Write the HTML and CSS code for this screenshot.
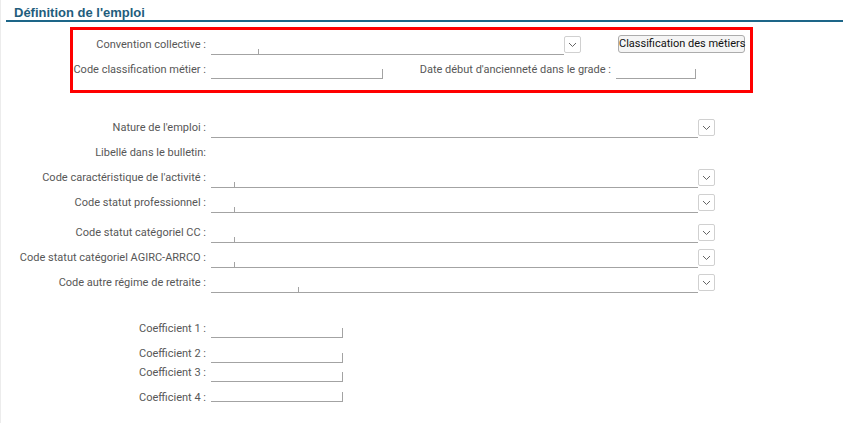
FILE: index.html
```html
<!DOCTYPE html>
<html lang="fr">
<head>
    <meta charset="UTF-8">
    <title>Définition de l'emploi</title>
    <link rel="stylesheet" href="styles.css">
</head>
<body>
    <div class="page">
        <h2 class="section-title">Définition de l'emploi</h2>

        <!-- Convention / classification block -->
        <div class="convention-box">
            <div class="row">
                <label class="label label-box">Convention collective :</label>
                <div class="combo combo-convention">
                    <div class="line"><span class="tick" style="width: 47px"></span></div>
                    <div class="drop"><svg width="9" height="6" viewBox="0 0 9 6"><polyline points="1,1 4.5,4.5 8,1" fill="none" stroke="#666" stroke-width="1"/></svg></div>
                </div>
                <button class="btn-classif">Classification des métiers</button>
            </div>
            <div class="row">
                <label class="label label-box">Code classification métier :</label>
                <div class="field field-end" style="width: 172px"><span class="tick-end"></span></div>
                <label class="label label-date">Date début d'ancienneté dans le grade :</label>
                <div class="field field-end" style="width: 80px"><span class="tick-end"></span></div>
            </div>
        </div>

        <!-- Emploi -->
        <div class="emploi">
            <div class="row">
                <label class="label">Nature de l'emploi :</label>
                <div class="combo">
                    <div class="line"></div>
                    <div class="drop"><svg width="9" height="6" viewBox="0 0 9 6"><polyline points="1,1 4.5,4.5 8,1" fill="none" stroke="#666" stroke-width="1"/></svg></div>
                </div>
            </div>
            <div class="row">
                <label class="label">Libellé dans le bulletin:</label>
            </div>
            <div class="row">
                <label class="label">Code caractéristique de l'activité :</label>
                <div class="combo">
                    <div class="line"><span class="tick" style="width: 23px"></span></div>
                    <div class="drop"><svg width="9" height="6" viewBox="0 0 9 6"><polyline points="1,1 4.5,4.5 8,1" fill="none" stroke="#666" stroke-width="1"/></svg></div>
                </div>
            </div>
            <div class="row row-spaced">
                <label class="label">Code statut professionnel :</label>
                <div class="combo">
                    <div class="line"><span class="tick" style="width: 23px"></span></div>
                    <div class="drop"><svg width="9" height="6" viewBox="0 0 9 6"><polyline points="1,1 4.5,4.5 8,1" fill="none" stroke="#666" stroke-width="1"/></svg></div>
                </div>
            </div>
            <div class="row">
                <label class="label">Code statut catégoriel CC :</label>
                <div class="combo">
                    <div class="line"><span class="tick" style="width: 23px"></span></div>
                    <div class="drop"><svg width="9" height="6" viewBox="0 0 9 6"><polyline points="1,1 4.5,4.5 8,1" fill="none" stroke="#666" stroke-width="1"/></svg></div>
                </div>
            </div>
            <div class="row">
                <label class="label">Code statut catégoriel AGIRC-ARRCO :</label>
                <div class="combo">
                    <div class="line"><span class="tick" style="width: 23px"></span></div>
                    <div class="drop"><svg width="9" height="6" viewBox="0 0 9 6"><polyline points="1,1 4.5,4.5 8,1" fill="none" stroke="#666" stroke-width="1"/></svg></div>
                </div>
            </div>
            <div class="row">
                <label class="label">Code autre régime de retraite :</label>
                <div class="combo">
                    <div class="line"><span class="tick" style="width: 87px"></span></div>
                    <div class="drop"><svg width="9" height="6" viewBox="0 0 9 6"><polyline points="1,1 4.5,4.5 8,1" fill="none" stroke="#666" stroke-width="1"/></svg></div>
                </div>
            </div>
        </div>

        <!-- Coefficients -->
        <div class="coefficients">
            <div class="row">
                <label class="label">Coefficient 1 :</label>
                <div class="field field-end" style="width: 132px"><span class="tick-end"></span></div>
            </div>
            <div class="row row-tight">
                <label class="label">Coefficient 2 :</label>
                <div class="field field-end" style="width: 132px"><span class="tick-end"></span></div>
            </div>
            <div class="row">
                <label class="label">Coefficient 3 :</label>
                <div class="field field-end" style="width: 132px"><span class="tick-end"></span></div>
            </div>
            <div class="row">
                <label class="label">Coefficient 4 :</label>
                <div class="field field-end field-short" style="width: 132px"><span class="tick-end"></span></div>
            </div>
        </div>
    </div>
</body>
</html>
```

FILE: styles.css
```css
body {
    margin: 0;
    font-family: Roboto, "Liberation Sans", Arial, sans-serif;
    font-size: 11px;
    color: #575757;
    background-color: #ffffff;
}

.page {
    min-height: 100vh;
    border-left: 1px solid #ececec;
    box-sizing: border-box;
}

.section-title {
    margin: 0 7px 0 5px;
    padding: 6px 0 1px 8px;
    font-family: "Liberation Sans", Arial, sans-serif;
    font-size: 13px;
    font-weight: bold;
    line-height: 13px;
    color: #1f5d7c;
    border-bottom: 2px solid #1d6688;
}

.convention-box {
    margin: 5px 0 0 69px;
    width: 677px;
    padding: 2px 0 8px 0;
    border: 3px solid #ff0000;
}

.row {
    display: flex;
    align-items: flex-start;
    height: 25px;
}

.row-spaced {
    height: 30px;
}

.row-tight {
    height: 19px;
}

.label {
    flex: none;
    width: 205px;
    padding-right: 5px;
    text-align: right;
    line-height: 25px;
    white-space: nowrap;
}

.label-box {
    width: 133px;
}

.label-date {
    width: 228px;
}

/* underlined inputs */
.field {
    flex: none;
    height: 22px;
    border-bottom: 1px solid #a3a3a3;
    display: flex;
    align-items: flex-end;
    box-sizing: border-box;
}

.field-end {
    justify-content: flex-end;
}

.field-short {
    height: 17px;
}

.tick {
    height: 5px;
    border-right: 1px solid #a3a3a3;
    flex: none;
}

.tick-end {
    height: 9px;
    border-right: 1px solid #a3a3a3;
}

/* combo boxes */
.combo {
    flex: none;
    display: flex;
    align-items: flex-start;
    width: 504px;
}

.combo-convention {
    width: 370px;
}

.combo .line {
    flex: 1;
    height: 23px;
    border-bottom: 1px solid #a3a3a3;
    box-sizing: border-box;
    display: flex;
    align-items: flex-end;
}

.drop {
    flex: none;
    width: 17px;
    height: 17px;
    margin-top: 4px;
    border: 1px solid #d0d0d0;
    border-radius: 2px;
    box-sizing: border-box;
    display: flex;
    align-items: center;
    justify-content: center;
}

.btn-classif {
    flex: none;
    margin: 3px 0 0 37px;
    width: 127px;
    height: 18px;
    padding: 0;
    font-family: Roboto, "Liberation Sans", Arial, sans-serif;
    font-size: 11px;
    color: #111111;
    background-color: #f5f5f5;
    border: 1px solid #acacac;
    border-radius: 3px;
    line-height: 14px;
    white-space: nowrap;
}

.emploi {
    margin-top: 22px;
}

.coefficients {
    margin-top: 21px;
}
```
